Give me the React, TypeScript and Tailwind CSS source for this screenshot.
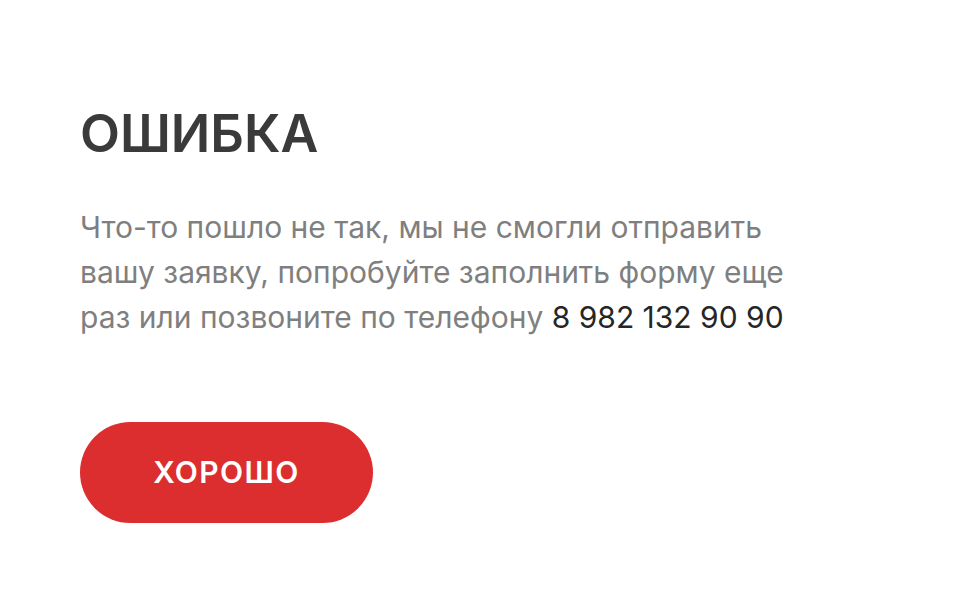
export default function App() {
  return (
    <div className="min-h-screen w-full bg-white px-[80px] pt-[104px] font-['Inter',sans-serif]">
      <h1 className="text-[52px] font-semibold leading-[60px] text-[#3a3a3a]">ОШИБКА</h1>
      <p className="mt-[41px] max-w-[800px] text-[30px] leading-[45px] text-[#7f7f7f]">
        Что-то пошло не так, мы не смогли отправить
        <br />
        вашу заявку, попробуйте заполнить форму еще
        <br />
        раз или позвоните по телефону <span className="text-[#262626]">8 982 132 90 90</span>
      </p>
      <button className="mt-[82px] flex h-[101px] w-[293px] items-center justify-center rounded-full bg-[#dc2e2f] text-[30px] font-semibold tracking-[1.4px] text-white">
        ХОРОШО
      </button>
    </div>
  );
}
